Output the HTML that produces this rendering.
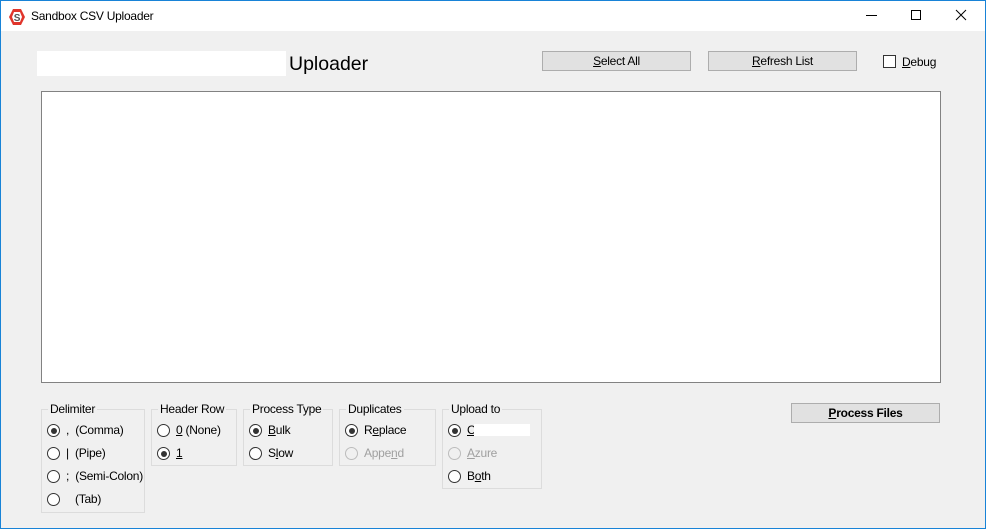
<!DOCTYPE html>
<html><head><meta charset="utf-8"><style>
*{box-sizing:border-box;margin:0;padding:0}
body{width:986px;height:529px;position:relative;background:#f0f0f0;font-family:"Liberation Sans",sans-serif;font-size:12px;color:#000;overflow:hidden;letter-spacing:-0.25px}
.a{position:absolute}
#win{left:0;top:0;width:986px;height:529px;border:1px solid #1883d7;border-top:none}
#title{left:0;top:0;width:986px;height:31px;background:#fff;border-top:1px solid #1883d7;border-left:1px solid #1883d7;border-right:1px solid #1883d7}
.btn{background:#e1e1e1;border:1px solid #adadad;text-align:center;font-size:12px;line-height:18px}
.gb{border:1px solid #dcdcdc}
.gl{background:#f0f0f0;padding:0 2px;font-size:12px;line-height:13px}
.r{width:13px;height:13px;border:1px solid #333;border-radius:50%;background:#fff}
.r.on::after{content:"";position:absolute;left:2.5px;top:2.5px;width:6px;height:6px;border-radius:50%;background:#333}
.r.dis{border-color:#bcbcbc;background:#f0f0f0}
.t{font-size:12px;line-height:14px}
.dis2{color:#a0a0a0}
u{text-decoration:underline}
</style></head><body>
<div class="a" id="title"></div>
<div class="a" id="win"></div>
<svg class="a" style="left:8px;top:8px" width="18" height="18" viewBox="0 0 18 18">
<polygon points="5,1 13,1 17,9 13,17 5,17 1,9" fill="#e0352b"/>
<polygon points="6,4 12,4 14,9 12,14 6,14 4,9" fill="#fff"/>
<text x="9" y="13" font-family="Liberation Sans" font-weight="bold" font-size="10" text-anchor="middle" fill="#555">S</text>
</svg>
<div class="a" style="left:31px;top:9px;font-size:12px">Sandbox CSV Uploader</div>
<div class="a" style="left:866px;top:15px;width:11px;height:1px;background:#000"></div>
<div class="a" style="left:911px;top:10px;width:10px;height:10px;border:1px solid #000"></div>
<svg class="a" style="left:955px;top:9px" width="12" height="12"><path d="M1 1L11 11M11 1L1 11" stroke="#000" stroke-width="1"/></svg>

<div class="a" style="left:37px;top:51px;width:249px;height:25px;background:#fff"></div>
<div class="a" style="left:289px;top:52px;font-size:19.5px;line-height:24px;letter-spacing:0">Uploader</div>
<div class="a btn" style="left:542px;top:51px;width:149px;height:20px"><u>S</u>elect All</div>
<div class="a btn" style="left:708px;top:51px;width:149px;height:20px"><u>R</u>efresh List</div>
<div class="a" style="left:883px;top:55px;width:13px;height:13px;border:1px solid #333;background:#fff"></div>
<div class="a t" style="left:902px;top:55px"><u>D</u>ebug</div>
<div class="a" style="left:41px;top:91px;width:900px;height:292px;background:#fff;border:1px solid #828282"></div>

<div class="a gb" style="left:41px;top:409px;width:104px;height:104px"></div>
<div class="a gl" style="left:48px;top:403px">Delimiter</div>
<div class="a r on" style="left:47px;top:424px"></div><div class="a t" style="left:66px;top:423px">,&nbsp; (Comma)</div>
<div class="a r" style="left:47px;top:447px"></div><div class="a t" style="left:66px;top:446px">|&nbsp; (Pipe)</div>
<div class="a r" style="left:47px;top:470px"></div><div class="a t" style="left:66px;top:469px">;&nbsp; (Semi-Colon)</div>
<div class="a r" style="left:47px;top:493px"></div><div class="a t" style="left:75px;top:492px">(Tab)</div>

<div class="a gb" style="left:151px;top:409px;width:86px;height:57px"></div>
<div class="a gl" style="left:158px;top:403px">Header Row</div>
<div class="a r" style="left:157px;top:424px"></div><div class="a t" style="left:176px;top:423px"><u>0</u> (None)</div>
<div class="a r on" style="left:157px;top:447px"></div><div class="a t" style="left:176px;top:446px"><u>1</u></div>

<div class="a gb" style="left:243px;top:409px;width:90px;height:57px"></div>
<div class="a gl" style="left:250px;top:403px">Process Type</div>
<div class="a r on" style="left:249px;top:424px"></div><div class="a t" style="left:268px;top:423px"><u>B</u>ulk</div>
<div class="a r" style="left:249px;top:447px"></div><div class="a t" style="left:268px;top:446px">S<u>l</u>ow</div>

<div class="a gb" style="left:339px;top:409px;width:97px;height:57px"></div>
<div class="a gl" style="left:346px;top:403px">Duplicates</div>
<div class="a r on" style="left:345px;top:424px"></div><div class="a t" style="left:364px;top:423px">R<u>e</u>place</div>
<div class="a r dis" style="left:345px;top:447px"></div><div class="a t dis2" style="left:364px;top:446px">Appe<u>n</u>d</div>

<div class="a gb" style="left:442px;top:409px;width:100px;height:80px"></div>
<div class="a gl" style="left:449px;top:403px">Upload to</div>
<div class="a r on" style="left:448px;top:424px"></div><div class="a t" style="left:467px;top:423px"><u>C</u></div>
<div class="a" style="left:474px;top:424px;width:56px;height:12px;background:#fff"></div>
<div class="a r dis" style="left:448px;top:447px"></div><div class="a t dis2" style="left:467px;top:446px"><u>A</u>zure</div>
<div class="a r" style="left:448px;top:470px"></div><div class="a t" style="left:467px;top:469px">B<u>o</u>th</div>

<div class="a btn" style="left:791px;top:403px;width:149px;height:20px;font-weight:bold"><u>P</u>rocess Files</div>
</body></html>
